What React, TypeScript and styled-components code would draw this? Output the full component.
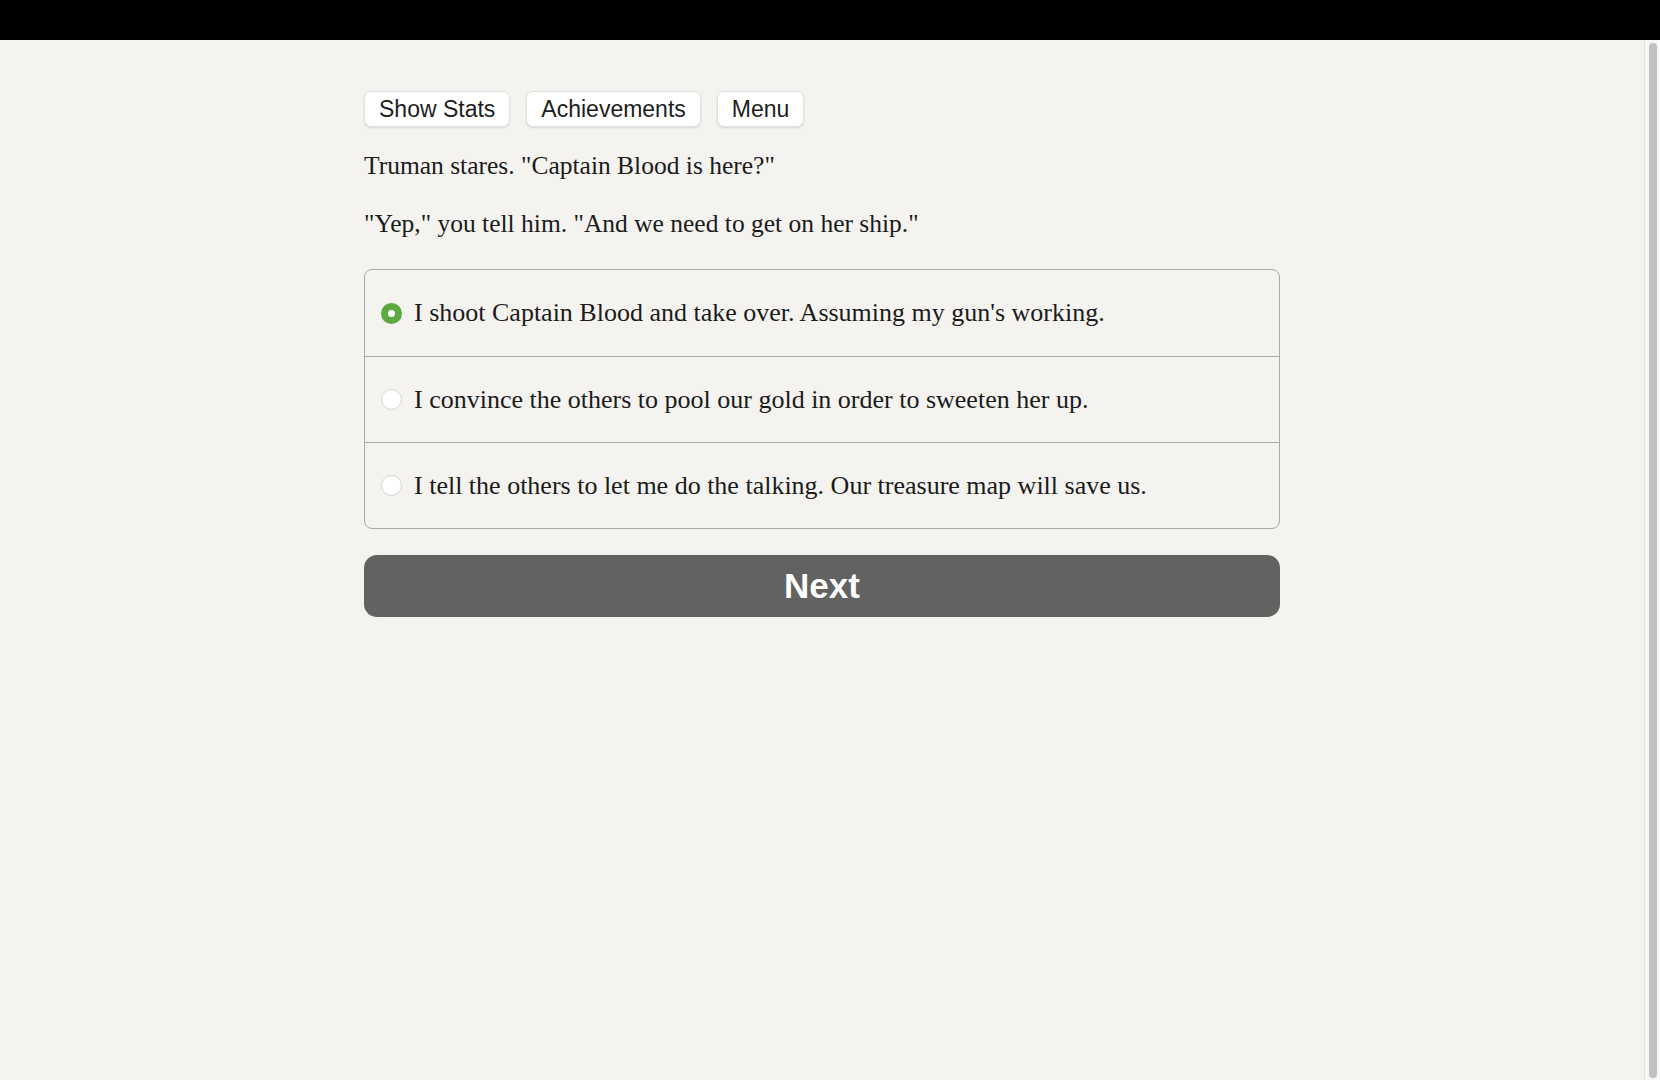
import React, { useState } from 'react';
import styled, { createGlobalStyle } from 'styled-components';

const GlobalStyle = createGlobalStyle`
  html, body {
    margin: 0;
    padding: 0;
    height: 100%;
    overflow: hidden;
    background: #f4f3ef;
  }
  * { box-sizing: border-box; }
`;

const Shell = styled.div`
  display: flex;
  flex-direction: column;
  height: 100vh;
`;

const TopBar = styled.div`
  height: 40px;
  flex-shrink: 0;
  background: #000;
`;

const Body = styled.div`
  flex: 1;
  display: flex;
  min-height: 0;
`;

const Main = styled.main`
  flex: 1;
  overflow: hidden;
  display: flex;
  justify-content: center;
  padding-top: 51px;
  background: #f4f3ef;
`;

// drawn scrollbar, the headless browser hides the real one
const ScrollTrack = styled.div`
  width: 16px;
  flex-shrink: 0;
  display: flex;
  padding: 3px 3px 2px 4px;
  background: #f7f7f6;
  border-left: 1px solid #e4e3e0;
`;

const ScrollThumb = styled.div`
  flex: 1;
  border-radius: 5px;
  background: #c1c1c1;
`;

const Column = styled.div`
  width: 916px;
  display: flex;
  flex-direction: column;
`;

const Toolbar = styled.div`
  display: flex;
  gap: 16px;
`;

const ToolButton = styled.button`
  height: 36px;
  padding: 0 14px;
  background: #fff;
  border: 1px solid #e2e1dd;
  border-radius: 7px;
  box-shadow: 0 1px 2px rgba(0, 0, 0, 0.12);
  font-family: 'Liberation Sans', Arial, sans-serif;
  font-size: 23px;
  color: #1d1d1d;
  cursor: pointer;
`;

const Passage = styled.p`
  margin: 0 0 22px;
  font-family: 'Liberation Serif', 'Times New Roman', serif;
  font-size: 25.5px;
  line-height: 36px;
  color: #1b1b1b;

  &:first-of-type {
    margin-top: 21px;
  }
`;

const ChoiceBox = styled.div`
  margin-top: 5px;
  border: 1px solid #a9a9a7;
  border-radius: 8px;
  overflow: hidden;
`;

const ChoiceRow = styled.label`
  display: flex;
  align-items: center;
  gap: 12px;
  height: 86px;
  padding: 0 16px;
  cursor: pointer;
  font-family: 'Liberation Serif', 'Times New Roman', serif;
  font-size: 26px;
  color: #1b1b1b;

  & + & {
    border-top: 1px solid #a9a9a7;
  }
`;

const Radio = styled.span<{ $on: boolean }>`
  width: 21px;
  height: 21px;
  flex-shrink: 0;
  border-radius: 50%;
  background: #fff;
  border: ${(p) => (p.$on ? '7px solid #5ca941' : '1px solid #d4d4d2')};
`;

const NextButton = styled.button`
  margin-top: 26px;
  height: 62px;
  border: none;
  border-radius: 13px;
  background: #626261;
  color: #fff;
  font-family: 'Liberation Sans', Arial, sans-serif;
  font-weight: bold;
  font-size: 35px;
  cursor: pointer;
`;

const choices = [
  "I shoot Captain Blood and take over. Assuming my gun's working.",
  'I convince the others to pool our gold in order to sweeten her up.',
  'I tell the others to let me do the talking. Our treasure map will save us.',
];

export default function App() {
  const [picked, setPicked] = useState(0);

  return (
    <Shell>
      <GlobalStyle />
      <TopBar />
      <Body>
        <Main>
          <Column>
            <Toolbar>
              <ToolButton>Show Stats</ToolButton>
              <ToolButton>Achievements</ToolButton>
              <ToolButton>Menu</ToolButton>
            </Toolbar>
            <Passage>Truman stares. "Captain Blood is here?"</Passage>
            <Passage>"Yep," you tell him. "And we need to get on her ship."</Passage>
            <ChoiceBox>
              {choices.map((c, i) => (
                <ChoiceRow key={i} onClick={() => setPicked(i)}>
                  <Radio $on={picked === i} />
                  {c}
                </ChoiceRow>
              ))}
            </ChoiceBox>
            <NextButton>Next</NextButton>
          </Column>
        </Main>
        <ScrollTrack>
          <ScrollThumb />
        </ScrollTrack>
      </Body>
    </Shell>
  );
}
